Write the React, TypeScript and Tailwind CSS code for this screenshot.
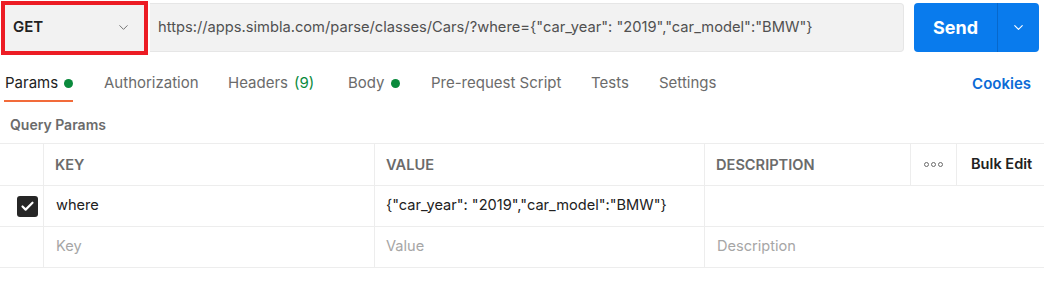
import { ChevronDown, Check } from 'lucide-react';

const tabs = [
  { label: 'Params', dot: true, active: true, w: 'w-[99px]' },
  { label: 'Authorization', w: 'w-[124px]' },
  { label: 'Headers', count: '(9)', w: 'w-[120px]' },
  { label: 'Body', dot: true, w: 'w-[83px]' },
  { label: 'Pre-request Script', w: 'w-[160px]' },
  { label: 'Tests', w: 'w-[68px]' },
  { label: 'Settings', w: 'w-[80px]' },
];

const cols = 'grid grid-cols-[44px_331px_330px_206px_46px_87px]';

export default function App() {
  return (
    <div className="w-[1058px] h-[292px] bg-white font-['Inter','Noto_Sans',sans-serif] text-[14.6px] text-[#212121]">
      {/* request bar */}
      <div className="flex h-[52px] pt-[3px]">
        <div className="relative ml-[2px] w-[145px] bg-[#f2f2f2] flex items-center justify-between pl-[11px] pr-[16px]">
          <span className="font-semibold text-[15px] text-[#212121]">GET</span>
          <ChevronDown size={15} strokeWidth={1.5} className="text-[#6b6b6b]" />
          {/* red annotation box */}
          <div className="absolute -left-[1px] -top-[2px] -right-[1px] -bottom-[3px] border-4 border-[#ec1c24] pointer-events-none" />
        </div>
        <div className="ml-[3px] w-[754px] bg-[#f2f2f2] border border-[#e6e6e6] border-l-0 rounded-r-[4px] flex items-center pl-[8px] text-[14.7px] text-[#505050] whitespace-nowrap">
          https://apps.simbla.com/parse/classes/Cars/?where={'{'}"car_year": "2019","car_model":"BMW"{'}'}
        </div>
        <div className="ml-[10px] w-[125px] bg-[#097bed] rounded-[4px] flex text-white">
          <div className="w-[84px] flex items-center justify-center font-bold text-[18px] border-r border-[#0768cc]">Send</div>
          <div className="flex-1 flex items-center justify-center">
            <ChevronDown size={15} strokeWidth={1.75} />
          </div>
        </div>
      </div>

      {/* tabs */}
      <div className="flex mt-[10px] h-[40px] text-[15px]">
        {tabs.map((t) => (
          <div key={t.label} className={`${t.w} pl-[5px] flex flex-col`}>
            <div className={`h-[20px] mt-[11px] flex items-center gap-[6px] whitespace-nowrap ${t.active ? 'text-[#212121]' : 'text-[#6b6b6b]'}`}>
              <span>{t.label}</span>
              {t.count && <span className="text-[#0a8a3c]">{t.count}</span>}
              {t.dot && <span className="w-[9px] h-[9px] rounded-full bg-[#0a8a3c]" />}
            </div>
            {t.active && <div className="mt-[7px] -ml-[1px] h-[2px] w-[69px] bg-[#f26b3a]" />}
          </div>
        ))}
        <div className="flex-1" />
        <div className="h-[20px] mt-[11px] pr-[27px] text-[#0b6bd6] font-semibold">Cookies</div>
      </div>

      {/* query params */}
      <div className="mt-[12px] pl-[10px] h-[20px] flex items-center font-semibold text-[#6b6b6b] text-[14px]">Query Params</div>

      <div className="mt-[9px] w-[1044px] border-t border-[#ededed]">
        <div className={`${cols} h-[42px] border-b border-[#ededed] font-semibold text-[#6b6b6b]`}>
          <div className="border-r border-[#ededed]" />
          <div className="border-r border-[#ededed] flex items-center pl-[11px] pt-[2px]">KEY</div>
          <div className="border-r border-[#ededed] flex items-center pl-[11px] pt-[2px]">VALUE</div>
          <div className="border-r border-[#ededed] flex items-center pl-[11px] pt-[2px]">DESCRIPTION</div>
          <div className="border-r border-[#ededed] flex items-center justify-center gap-[2px]">
            <span className="w-[5px] h-[5px] rounded-full border border-[#6b6b6b]" />
            <span className="w-[5px] h-[5px] rounded-full border border-[#6b6b6b]" />
            <span className="w-[5px] h-[5px] rounded-full border border-[#6b6b6b]" />
          </div>
          <div className="flex items-center pl-[14px] text-[#212121]">Bulk Edit</div>
        </div>

        <div className={`${cols} h-[41px] border-b border-[#ededed]`}>
          <div className="border-r border-[#ededed] flex items-center pl-[17px]">
            <div className="w-[21px] h-[21px] rounded-[3px] bg-[#262626] flex items-center justify-center">
              <Check size={15} strokeWidth={3.5} className="text-white" />
            </div>
          </div>
          <div className="border-r border-[#ededed] flex items-center pl-[12px]">where</div>
          <div className="border-r border-[#ededed] flex items-center pl-[11px] whitespace-nowrap">
            {'{'}"car_year": "2019","car_model":"BMW"{'}'}
          </div>
          <div />
          <div />
          <div />
        </div>

        <div className={`${cols} h-[41px] border-b border-[#ededed] text-[#a6a6a6]`}>
          <div className="border-r border-[#ededed]" />
          <div className="border-r border-[#ededed] flex items-center pl-[12px]">Key</div>
          <div className="border-r border-[#ededed] flex items-center pl-[11px]">Value</div>
          <div className="flex items-center pl-[12px]">Description</div>
          <div />
          <div />
        </div>
      </div>
    </div>
  );
}
